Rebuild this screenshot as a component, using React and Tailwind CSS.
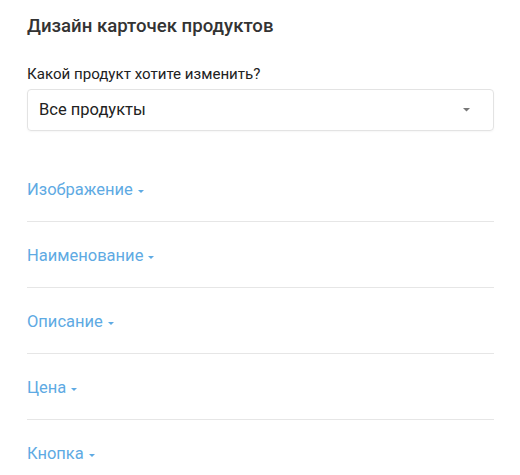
import React from "react";

const sections = ["Изображение", "Наименование", "Описание", "Цена", "Кнопка"];

function Caret({ className, w = 8 }) {
  return (
    <svg width={w} height={w / 2} viewBox="0 0 8 4" className={className}>
      <path d="M0 0 L8 0 L4 4 Z" fill="currentColor" />
    </svg>
  );
}

export default function App() {
  return (
    <div className="w-[520px] h-[475px] bg-white overflow-hidden px-[27px] pt-[14px]" style={{ fontFamily: "Roboto, 'Noto Sans', sans-serif" }}>
      <h1 className="text-[18.6px] leading-[24px] font-medium text-[#333333]">Дизайн карточек продуктов</h1>
      <div className="mt-[26px] text-[15.1px] leading-[20px] text-[#222222]">Какой продукт хотите изменить?</div>
      <div className="mt-[5px] h-[42px] w-[467px] border border-[#e3e3e3] rounded-[4px] flex items-center justify-between pl-[11px] pr-[23px] shadow-[0_1px_2px_rgba(0,0,0,0.04)]">
        <span className="text-[16.5px] text-[#222222]">Все продукты</span>
        <Caret className="text-[#777777]" w={7} />
      </div>
      <div className="mt-[25px] w-[467px]">
        {sections.map((s, i) => (
          <div key={s} className={i < sections.length - 1 ? "border-b border-[#e6e6e6]" : ""}>
            <div className="h-[65px] pt-[4px] flex items-center gap-[5px] text-[16.5px] text-[#5eaae3]">
              <span>{s}</span>
              <Caret className="text-[#5eaae3] mt-[1px]" w={6} />
            </div>
          </div>
        ))}
      </div>
    </div>
  );
}
